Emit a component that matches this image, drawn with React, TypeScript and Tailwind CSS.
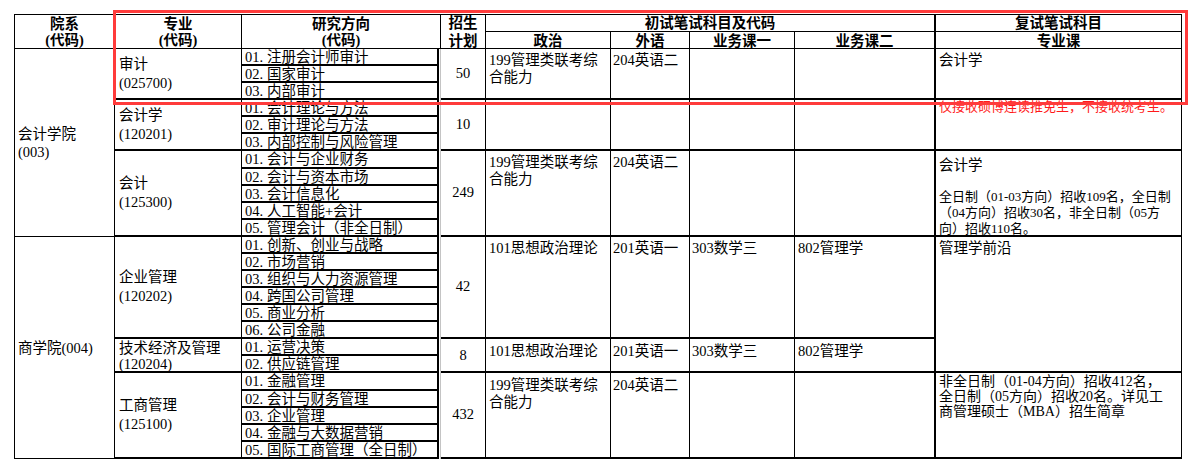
import React from "react";

type Group = {
  rows: string;
  major: string[];
  ml: string;
  plan: string;
  pol: string[];
  lang: string;
  c1: string;
  c2: string;
  pt: string;
};

const groups: Group[] = [
  { rows: "row-start-3 row-span-3", major: ["审计", "(025700)"], ml: "leading-[19px]", plan: "50", pol: ["199管理类联考综", "合能力"], lang: "204英语二", c1: "", c2: "", pt: "pt-[3px]" },
  { rows: "row-start-6 row-span-3", major: ["会计学", "(120201)"], ml: "leading-[19px]", plan: "10", pol: [], lang: "", c1: "", c2: "", pt: "pt-[3px]" },
  { rows: "row-start-9 row-span-5", major: ["会计", "(125300)"], ml: "leading-[19px]", plan: "249", pol: ["199管理类联考综", "合能力"], lang: "204英语二", c1: "", c2: "", pt: "pt-[3px]" },
  { rows: "row-start-14 row-span-6", major: ["企业管理", "(120202)"], ml: "leading-[19px]", plan: "42", pol: ["101思想政治理论"], lang: "201英语一", c1: "303数学三", c2: "802管理学", pt: "pt-[3px]" },
  { rows: "row-start-20 row-span-2", major: ["技术经济及管理", "(120204)"], ml: "leading-[16px] pt-[1px]", plan: "8", pol: ["101思想政治理论"], lang: "201英语一", c1: "303数学三", c2: "802管理学", pt: "pt-[4px]" },
  { rows: "row-start-22 row-span-5", major: ["工商管理", "(125100)"], ml: "leading-[19px]", plan: "432", pol: ["199管理类联考综", "合能力"], lang: "204英语二", c1: "", c2: "", pt: "pt-[4px]" },
];

const directions: string[][] = [
  ["01.注册会计师审计", "02.国家审计", "03.内部审计"],
  ["01.会计理论与方法", "02.审计理论与方法", "03.内部控制与风险管理"],
  ["01.会计与企业财务", "02.会计与资本市场", "03.会计信息化", "04.人工智能+会计", "05.管理会计（非全日制）"],
  ["01.创新、创业与战略", "02.市场营销", "03.组织与人力资源管理", "04.跨国公司管理", "05.商业分析", "06.公司金融"],
  ["01.运营决策", "02.供应链管理"],
  ["01.金融管理", "02.会计与财务管理", "03.企业管理", "04.金融与大数据营销", "05.国际工商管理（全日制）"],
];

const hd = "border-r border-b border-black flex flex-col items-center justify-center font-bold leading-[16px] whitespace-nowrap";
const cellB = "border-r border-b-2 border-black overflow-hidden whitespace-nowrap";

export default function App() {
  return (
    <div className="relative w-[1197px] h-[471px] bg-white text-black text-[14.5px] font-['Liberation_Serif','Noto_Sans_CJK_SC',serif] pl-[14px] pt-[14px]">
      <div className="grid w-max grid-cols-[100px_127px_199px_45px_125px_79px_105px_141px_246px] grid-rows-[17px_17px_repeat(24,17.08px)] border-l border-t border-black">
        {/* header */}
        <div className={`${hd} col-start-1 row-start-1 row-span-2`}>
          <div>院系</div>
          <div>(代码)</div>
        </div>
        <div className={`${hd} col-start-2 row-start-1 row-span-2`}>
          <div>专业</div>
          <div>(代码)</div>
        </div>
        <div className={`${hd} col-start-3 row-start-1 row-span-2`}>
          <div>研究方向</div>
          <div>(代码)</div>
        </div>
        <div className={`${hd} col-start-4 row-start-1 row-span-2 leading-[18px]`}>
          <div>招生</div>
          <div>计划</div>
        </div>
        <div className={`${hd} col-start-5 col-span-4 row-start-1 border-r-2`}>初试笔试科目及代码</div>
        <div className={`${hd} col-start-5 row-start-2 pt-[2px]`}>政治</div>
        <div className={`${hd} col-start-6 row-start-2 pt-[2px]`}>外语</div>
        <div className={`${hd} col-start-7 row-start-2 pt-[2px]`}>业务课一</div>
        <div className={`${hd} col-start-8 row-start-2 pt-[2px] border-r-2`}>业务课二</div>
        <div className={`${hd} col-start-9 row-start-1`}>复试笔试科目</div>
        <div className={`${hd} col-start-9 row-start-2 pt-[2px]`}>专业课</div>

        {/* 院系 */}
        <div className="col-start-1 row-start-3 row-span-11 border-r border-b border-black flex flex-col justify-center pl-[3px] leading-[18px] pt-[2px]">
          <div>会计学院</div>
          <div>(003)</div>
        </div>
        <div className="col-start-1 row-start-14 row-span-13 border-r border-b border-black flex flex-col justify-center pl-[3px] pt-[4px]">
          <div>商学院(004)</div>
        </div>

        {/* 研究方向 */}
        <div className="col-start-3 row-start-3 row-span-24 border-r border-[#c4c4c4] flex flex-col">
          {directions.map((grp, gi) =>
            grp.map((d, di) => {
              const k = d.indexOf(".") + 1;
              return (
                <div
                  key={`${gi}-${di}`}
                  className="flex-1 min-h-0 mr-[1px] border-r-2 border-b-2 border-black pl-[3px] leading-[15px] pt-[1px] overflow-hidden whitespace-nowrap"
                >
                  <span className="inline-block w-[22px]">{d.slice(0, k)}</span>
                  {d.slice(k)}
                </div>
              );
            })
          )}
        </div>

        {groups.map((g, i) => (
          <React.Fragment key={i}>
            <div className={`${g.rows} col-start-2 ${cellB} flex flex-col justify-center pl-[4px] ${g.ml}`}>
              {g.major.map((m) => (
                <div key={m}>{m}</div>
              ))}
            </div>
            <div className={`${g.rows} col-start-4 ${cellB} flex items-center justify-center`}>{g.plan}</div>
            <div className={`${g.rows} col-start-5 ${cellB} pl-[3px] leading-[17px] ${g.pt}`}>
              {g.pol.map((p) => (
                <div key={p}>{p}</div>
              ))}
            </div>
            <div className={`${g.rows} col-start-6 ${cellB} pl-[2px] leading-[17px] ${g.pt}`}>{g.lang}</div>
            <div className={`${g.rows} col-start-7 ${cellB} pl-[2px] leading-[17px] ${g.pt}`}>{g.c1}</div>
            <div className={`${g.rows} col-start-8 ${cellB} border-r-2 pl-[3px] leading-[17px] ${g.pt}`}>{g.c2}</div>
          </React.Fragment>
        ))}

        {/* 复试 */}
        <div className={`row-start-3 row-span-3 col-start-9 ${cellB} pl-[3px] pt-[3px] leading-[17px]`}>会计学</div>
        <div className={`row-start-6 row-span-3 col-start-9 ${cellB} pl-[3px] text-[13px] leading-[14px] text-[#ff1a1a]`}>
          仅接收硕博连读推免生，不接收统考生。
        </div>
        <div className={`row-start-9 row-span-5 col-start-9 ${cellB} pl-[3px] pt-[4px]`}>
          <div className="leading-[20px]">会计学</div>
          <div className="h-[14px]" />
          <div className="text-[13px] leading-[16px]">
            <div>全日制（01-03方向）招收109名，全日制</div>
            <div>（04方向）招收30名，非全日制（05方</div>
            <div>向）招收110名。</div>
          </div>
        </div>
        <div className={`row-start-14 row-span-8 col-start-9 ${cellB} pl-[3px] pt-[3px] leading-[17px]`}>管理学前沿</div>
        <div className={`row-start-22 row-span-5 col-start-9 ${cellB} pl-[3px] pt-[1px] text-[14px] leading-[15px]`}>
          <div>非全日制（01-04方向）招收412名，</div>
          <div>全日制（05方向）招收20名。详见工</div>
          <div>商管理硕士（MBA）招生简章</div>
        </div>
      </div>

      {/* annotation box */}
      <div className="absolute left-[113px] top-[10px] w-[1075px] h-[95px] border-[3px] border-[#ff3b3b] pointer-events-none" />
    </div>
  );
}
